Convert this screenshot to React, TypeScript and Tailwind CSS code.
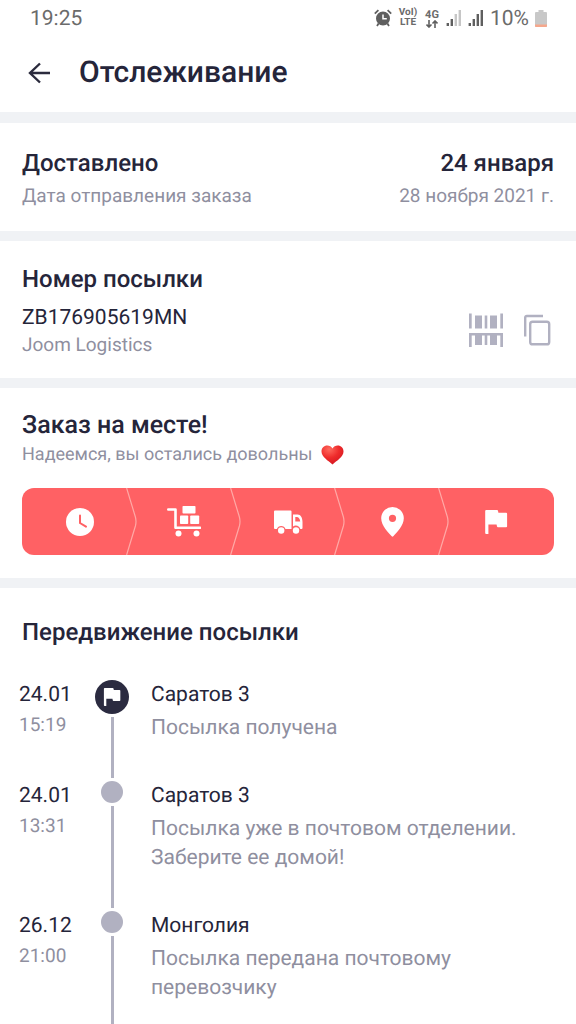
import type { ReactNode } from 'react';

interface TrackingEvent {
  date: string;
  time: string;
  place: string;
  description: string;
  current?: boolean;
}

const events: TrackingEvent[] = [
  { date: '24.01', time: '15:19', place: 'Саратов 3', description: 'Посылка получена', current: true },
  {
    date: '24.01',
    time: '13:31',
    place: 'Саратов 3',
    description: 'Посылка уже в почтовом отделении. Заберите ее домой!',
  },
  { date: '26.12', time: '21:00', place: 'Монголия', description: 'Посылка передана почтовому перевозчику' },
];

function AlarmIcon() {
  return (
    <svg width="18" height="18" viewBox="0 0 18 18" fill="none" aria-hidden="true">
      <circle cx="9" cy="9.5" r="6.2" fill="#5f5f5f" stroke="#5f5f5f" strokeWidth="1.6" />
      <path d="M9 5.5v4.3h3.8" stroke="#fff" strokeWidth="1.5" />
      <path d="M.8 4.6 4.4 1.2M17.2 4.6l-3.6-3.4M4.6 14.6 3 17M13.4 14.6l1.6 2.4" stroke="#5f5f5f" strokeWidth="1.8" />
    </svg>
  );
}

function SignalIcon({ level }: { level: number }) {
  const bars = [3, 7, 12, 16];
  return (
    <svg width="16" height="17" viewBox="0 0 16 17" aria-hidden="true">
      {bars.map((height, i) => (
        <rect key={height} x={i * 4 + 0.6} y={16 - height} width="2.4" height={height} fill={i < level ? '#5f5f5f' : '#c6c6c6'} />
      ))}
    </svg>
  );
}

function BatteryIcon() {
  return (
    <svg width="12" height="17" viewBox="0 0 12 17" aria-hidden="true">
      <path d="M3.5 0h5v2H11a1 1 0 0 1 1 1v13a1 1 0 0 1-1 1H1a1 1 0 0 1-1-1V3a1 1 0 0 1 1-1h2.5z" fill="#c8c8c8" />
      <path d="M0 14.5h12V16a1 1 0 0 1-1 1H1a1 1 0 0 1-1-1z" fill="#f5a78c" />
    </svg>
  );
}

function BackIcon() {
  return (
    <svg width="24" height="24" viewBox="0 0 24 24" fill="none" stroke="#2b2b3d" strokeWidth="2.4" aria-hidden="true">
      <path d="M23 12H3M13 2.5 3 12l10 9.5" />
    </svg>
  );
}

function BarcodeIcon() {
  return (
    <svg width="34" height="34" viewBox="0 0 34 34" fill="#b1b1c1" aria-hidden="true">
      <path d="M0 .5h2.7v15H0zM31.3.5H34v15h-2.7zM6 2.5h7v13H6zM15.7 2.5h2.6v13h-2.6zM21 2.5h7v13h-7z" />
      <path d="M0 20h34v14h-2.7V22.5H28V32h-7v-9.5h-2.7V32h-2.6v-9.5H13V32H6v-9.5H2.7V34H0z" />
    </svg>
  );
}

function CopyIcon() {
  return (
    <svg width="28" height="32" viewBox="0 0 28 32" fill="none" stroke="#b1b1c1" strokeWidth="2.4" aria-hidden="true">
      <path d="M2.2 22.5V3.6a1.6 1.6 0 0 1 1.6-1.6H20" />
      <rect x="7.2" y="7.7" width="19" height="22.6" rx="2.4" />
    </svg>
  );
}

function HeartIcon() {
  return (
    <svg width="23" height="20" viewBox="0 0 23 20" role="img" aria-label="❤️">
      <defs>
        <radialGradient id="heart" cx="0.35" cy="0.2" r="0.9">
          <stop offset="0" stopColor="#ff6a5e" />
          <stop offset="0.5" stopColor="#ee2b2b" />
          <stop offset="1" stopColor="#cf1420" />
        </radialGradient>
      </defs>
      <path
        d="M11.5 3.6C10.4 1.5 8.5.5 6.3.5 3 .5.5 3 .5 6.4c0 5.6 6.8 9 11 13.1 4.2-4.1 11-7.5 11-13.1C22.5 3 20 .5 16.7.5c-2.2 0-4.1 1-5.2 3.1z"
        fill="url(#heart)"
      />
    </svg>
  );
}

function ClockIcon() {
  return (
    <svg width="28" height="28" viewBox="0 0 28 28" fill="none" aria-hidden="true">
      <circle cx="14" cy="14" r="14" fill="#fff" />
      <path d="M14 7.5V15l6 3.6" stroke="#ff6164" strokeWidth="2" strokeLinecap="round" />
    </svg>
  );
}

function CartIcon() {
  return (
    <svg width="34" height="31" viewBox="0 0 34 31" fill="#fff" aria-hidden="true">
      <path d="M1.3 3.5H8.5V21.8H33" fill="none" stroke="#fff" strokeWidth="2.6" strokeLinecap="round" strokeLinejoin="round" />
      <rect x="15.5" y="0" width="13" height="7.6" rx="0.8" />
      <rect x="13" y="9.5" width="8.2" height="8.5" rx="0.8" />
      <rect x="23.2" y="9.5" width="9" height="8.5" rx="0.8" />
      <circle cx="11.5" cy="27.5" r="3" />
      <circle cx="29.5" cy="27.5" r="3" />
    </svg>
  );
}

function TruckIcon() {
  return (
    <svg width="29" height="24" viewBox="0 0 29 24" fill="#fff" aria-hidden="true">
      <path d="M1 .5h15.5a1 1 0 0 1 1 1V19H11.5a4.6 4.6 0 0 0-8.6 0H1a1 1 0 0 1-1-1V1.5a1 1 0 0 1 1-1z" />
      <path
        fillRule="evenodd"
        d="M19 4.5h4.500c3.3 0 5 3.5 5 7.5v6a1 1 0 0 1-1 1h-1.2a4.6 4.6 0 0 0-7.3-2.6zM21.3 7v4.6h4.900c-.3-3-1.6-4.6-3.4-4.6z"
      />
      <circle cx="7.2" cy="20.5" r="3.2" />
      <circle cx="22" cy="20.5" r="3.2" />
    </svg>
  );
}

function PinIcon() {
  return (
    <svg width="23" height="30" viewBox="0 0 23 30" aria-hidden="true">
      <path
        fillRule="evenodd"
        d="M11.5 0A11.3 11.3 0 0 0 .2 11.3C.2 19 7.5 25.5 10.7 29.3Q11.5 30 12.3 29.3C15.5 25.5 22.8 19 22.8 11.3A11.3 11.3 0 0 0 11.5 0zm0 7.7a3.6 3.6 0 1 1 0 7.2 3.6 3.6 0 0 1 0-7.2z"
        fill="#fff"
      />
    </svg>
  );
}

function FlagIcon({ size = 24 }: { size?: number }) {
  return (
    <svg width={size} height={size} viewBox="0 0 24 24" fill="#fff" aria-hidden="true">
      <path d="M2.2 0H13a1 1 0 0 1 1 .8l.4 2h7.7a1 1 0 0 1 1 1v12.4a1 1 0 0 1-1 1H14a1 1 0 0 1-1-.8l-.4-2H4.4V24H2.2a1 1 0 0 1-1-1V1a1 1 0 0 1 1-1z" />
    </svg>
  );
}

function Chevron() {
  return (
    <svg
      className="absolute top-0 -right-[5px] h-full w-[11px]"
      viewBox="0 0 11 67"
      fill="none"
      stroke="#ffa9a6"
      strokeWidth="1.2"
      aria-hidden="true"
    >
      <path d="M.6 0 9.4 29Q10.6 33.5 9.4 38L.6 67" />
    </svg>
  );
}

function StatusBar() {
  return (
    <div className="flex h-9 items-center justify-between pr-[29px] pl-[30px] text-[21px] leading-[34px] text-[#6b6b6b]">
      <span className="pt-0.5">19:25</span>
      <div className="flex items-center gap-1.5">
        <AlarmIcon />
        <div className="flex w-5 flex-col text-center text-[10px] leading-[10px] font-bold">
          <span>VoI)</span>
          <span>LTE</span>
        </div>
        <div className="flex w-4 flex-col items-center text-[11px] leading-[11px] font-bold">
          <span>4G</span>
          <svg width="12" height="8" viewBox="0 0 12 8" fill="none" stroke="#5f5f5f" strokeWidth="1.6" aria-hidden="true">
            <path d="M3 0v7M.5 4.5 3 7l2.5-2.5M9 8V1M6.5 3.5 9 1l2.5 2.5" />
          </svg>
        </div>
        <SignalIcon level={2} />
        <SignalIcon level={4} />
        <span className="pt-0.5">10%</span>
        <BatteryIcon />
      </div>
    </div>
  );
}

function SectionTitle({ children }: { children: ReactNode }) {
  return <h2 className="text-[24px] leading-8 font-medium">{children}</h2>;
}

function ProgressBar() {
  const steps = [
    { name: 'clock', icon: <ClockIcon /> },
    { name: 'cart', icon: <CartIcon /> },
    { name: 'truck', icon: <TruckIcon /> },
    { name: 'pin', icon: <PinIcon /> },
    { name: 'flag', icon: <FlagIcon /> },
  ];

  return (
    <ol className="mt-5 flex h-[67px] rounded-xl bg-[#ff6164] px-1.5">
      {steps.map((step, i) => (
        <li key={step.name} className="relative flex flex-1 items-center justify-center">
          {step.icon}
          {i < steps.length - 1 && <Chevron />}
        </li>
      ))}
    </ol>
  );
}

function EventRow({ event }: { event: TrackingEvent }) {
  return (
    <li className="flex">
      <div className="w-[76px] shrink-0 leading-[30px]">
        <p className="text-[21px]">{event.date}</p>
        <p className="text-[19px] text-[#8f8f9f]">{event.time}</p>
      </div>

      {/* Marker */}
      <div className="flex w-[34px] shrink-0 flex-col items-center">
        {event.current ? (
          <span className="flex h-[34px] w-[34px] items-center justify-center rounded-full bg-[#2b2b40]">
            <FlagIcon size={18} />
          </span>
        ) : (
          <span className="h-[22px] w-[22px] rounded-full bg-[#b1b1c1]" />
        )}
        <span className="my-[3px] w-[3px] flex-1 bg-[#b1b1c1]" />
      </div>

      <div className="flex-1 pb-[38px] pl-[22px]">
        <h3 className="text-[21px] leading-[30px]">{event.place}</h3>
        <p className="mt-1 text-[21px] leading-[29px] text-[#8f8f9f]">{event.description}</p>
      </div>
    </li>
  );
}

export default function App() {
  return (
    <div className="h-screen overflow-hidden bg-white font-['Roboto',sans-serif] text-[#25253a] [text-rendering:geometricPrecision]">
      <StatusBar />

      {/* Header */}
      <header className="flex h-[74px] items-center gap-7 px-[27px]">
        <button type="button" aria-label="Назад">
          <BackIcon />
        </button>
        <h1 className="text-[30px] leading-9 font-medium">Отслеживание</h1>
      </header>

      <main className="pt-0.5">
        {/* Delivery date */}
        <section className="border-t-[11px] border-[#f0f2f5] px-[22px] pt-6 pb-[22px]">
          <div className="flex justify-between">
            <SectionTitle>Доставлено</SectionTitle>
            <p className="text-[24px] leading-8 font-medium">24 января</p>
          </div>
          <div className="mt-1 flex justify-between text-[19px] leading-[26px] text-[#8f8f9f]">
            <p>Дата отправления заказа</p>
            <p>28 ноября 2021 г.</p>
          </div>
        </section>

        {/* Parcel number */}
        <section className="border-t-10 border-[#f0f2f5] px-[22px] pt-[22px] pb-[21px]">
          <SectionTitle>Номер посылки</SectionTitle>
          <div className="mt-2 flex items-center justify-between">
            <div>
              <p className="text-[21px] leading-[30px]">ZB176905619MN</p>
              <p className="text-[19px] leading-6 text-[#8f8f9f]">Joom Logistics</p>
            </div>
            <div className="flex items-center gap-5 pr-[3px]">
              <button type="button" aria-label="Штрихкод">
                <BarcodeIcon />
              </button>
              <button type="button" aria-label="Скопировать">
                <CopyIcon />
              </button>
            </div>
          </div>
        </section>

        {/* Order status */}
        <section className="border-t-10 border-[#f0f2f5] px-[22px] pt-[22px] pb-[23px]">
          <h2 className="text-[25px] leading-8 font-medium">Заказ на месте!</h2>
          <p className="flex items-center gap-2 text-[18px] leading-[26px] text-[#8f8f9f]">
            Надеемся, вы остались довольны
            <HeartIcon />
          </p>
          <ProgressBar />
        </section>

        {/* Parcel history */}
        <section className="border-t-10 border-[#f0f2f5] pt-7">
          <div className="px-[22px]">
            <SectionTitle>Передвижение посылки</SectionTitle>
          </div>
          <ol className="mt-8 px-[19px]">
            {events.map((event) => (
              <EventRow key={event.date + event.time} event={event} />
            ))}
          </ol>
        </section>
      </main>
    </div>
  );
}
